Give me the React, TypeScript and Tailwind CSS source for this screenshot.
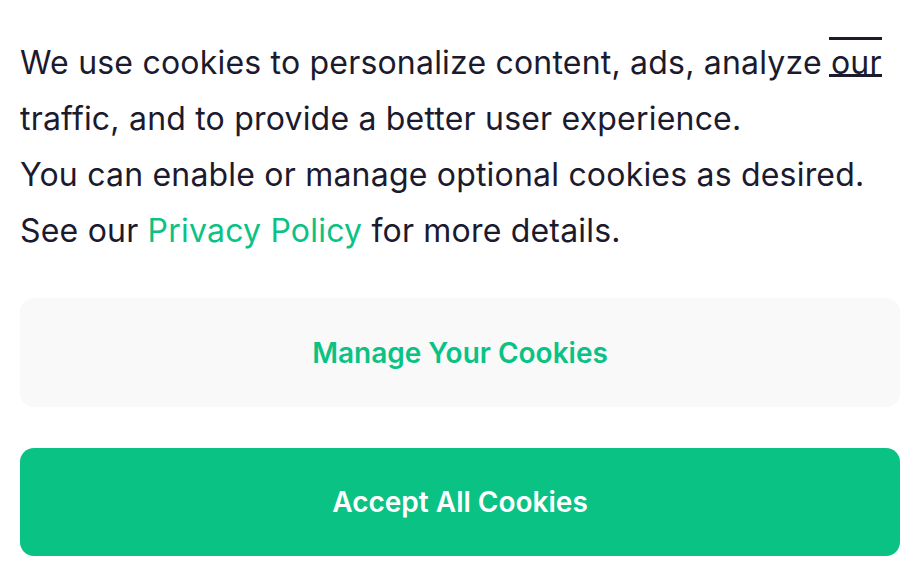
export default function App() {
  return (
    <div
      className="relative min-h-screen bg-white px-5 pt-[35px]"
      style={{ fontFamily: "Inter, 'Noto Sans', sans-serif" }}
    >
      {/* menu icon, sits over the text */}
      <button className="absolute right-[38px] top-[37px] flex h-[40px] w-[53px] flex-col justify-between">
        <span className="block h-[3px] w-full bg-[#1b1a2e]" />
        <span className="block h-[3px] w-full bg-[#1b1a2e]" />
      </button>

      <p className="text-[32px] leading-[56px] tracking-[0.2px] text-[#1b1a2e]">
        We use cookies to personalize content, ads, analyze our traffic, and to
        provide a better user experience.
        <br />
        You can enable or manage optional cookies as desired.
        <br />
        See our <a className="text-[#0bc285]">Privacy Policy</a> for more
        details.
      </p>

      <div className="mt-[39px] flex flex-col gap-[41px]">
        <button className="flex h-[109px] w-full items-center justify-center rounded-[14px] bg-[#f9f9f9] text-[28px] font-semibold text-[#0bc285]">
          Manage Your Cookies
        </button>
        <button className="flex h-[108px] w-full items-center justify-center rounded-[14px] bg-[#0bc285] text-[28px] font-semibold text-white">
          Accept All Cookies
        </button>
      </div>
    </div>
  );
}
